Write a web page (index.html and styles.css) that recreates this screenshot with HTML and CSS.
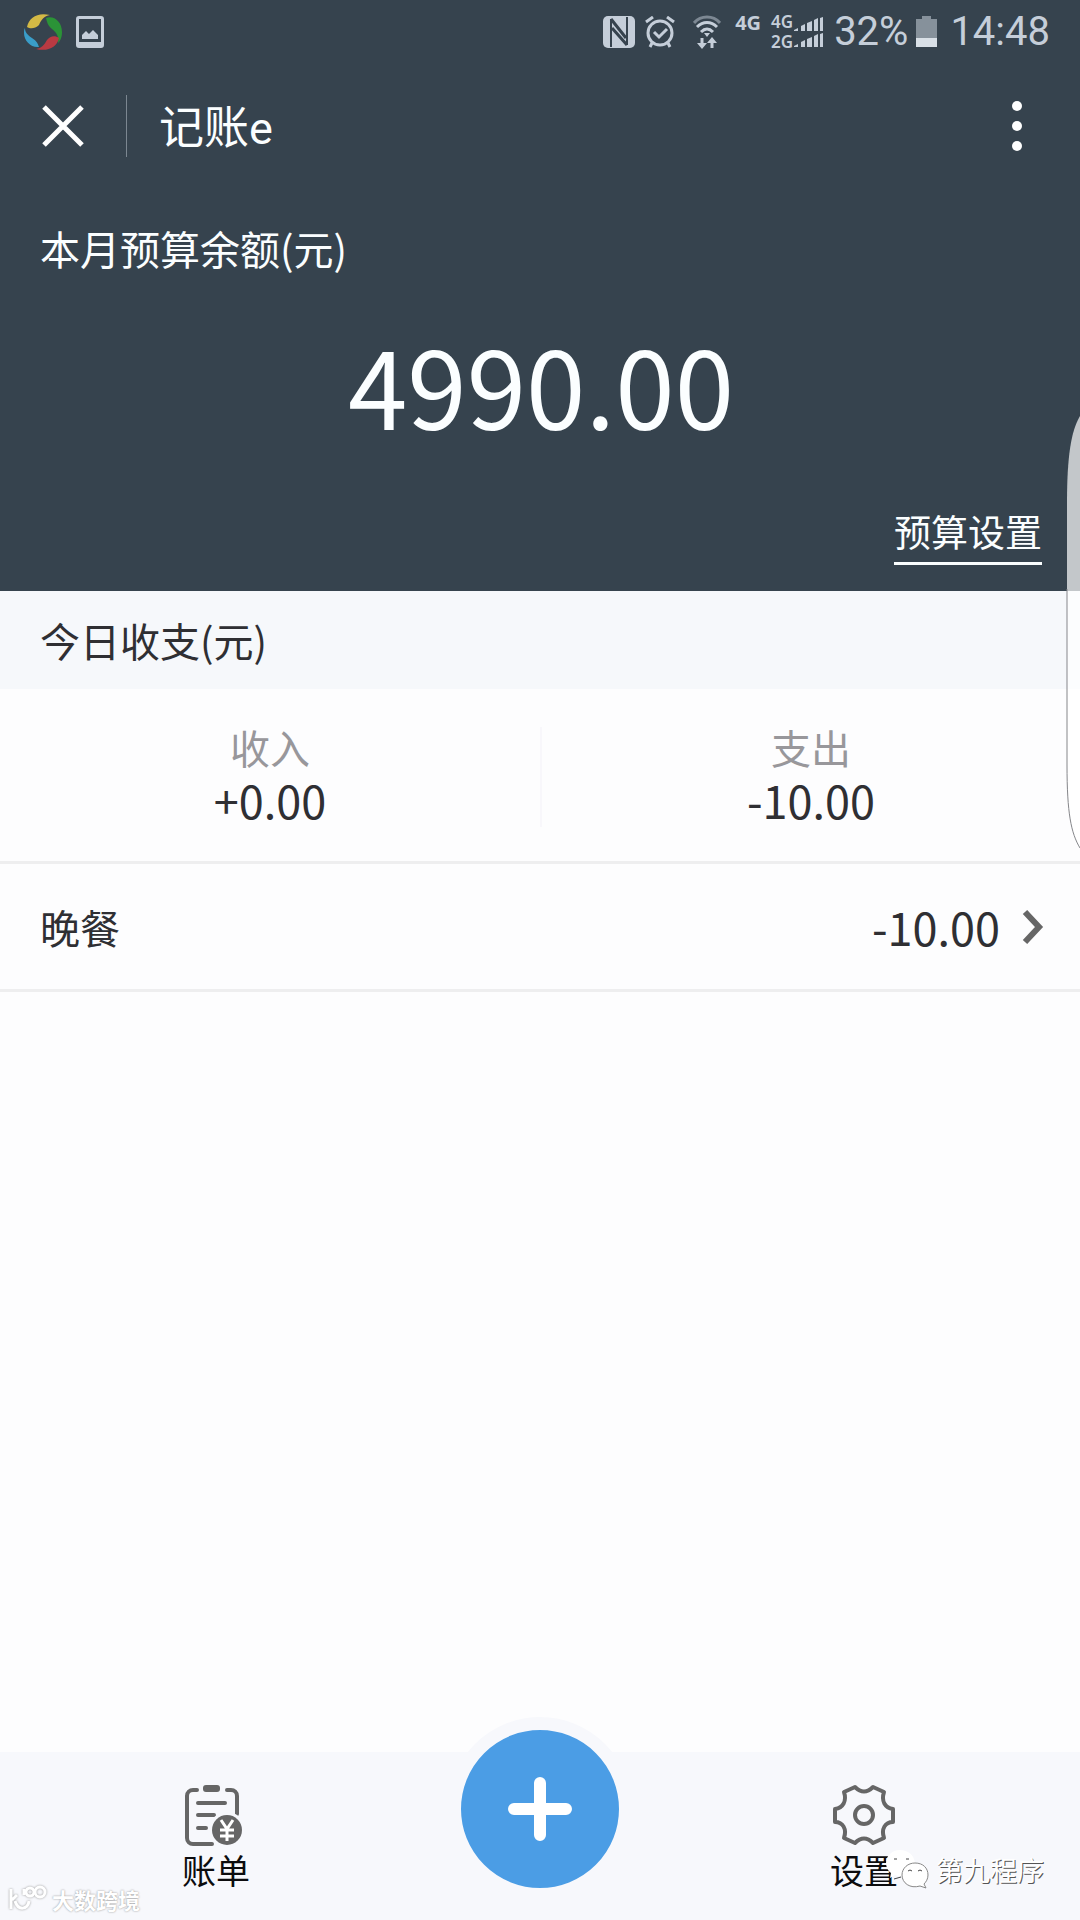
FILE: index.html
```html
<!DOCTYPE html>
<html lang="zh-CN">
<head>
<meta charset="utf-8">
<meta name="viewport" content="width=device-width, initial-scale=1">
<title>记账e</title>
<link rel="stylesheet" href="styles.css">
</head>
<body>
<div class="app">
  <header class="top">
    <div class="status">
      <svg class="status-swirl" width="38" height="38" viewBox="0 0 38 38" aria-hidden="true">
        <path d="M3 14C5 4 14-1 26 2c-6 1-9 5-11 10-4 4-9 4-12 2z" fill="#d3b945"/>
        <path d="M22 5c8-3 16 4 16 14 0 6-2 9-4 11 1-6-1-10-6-14-4-3-5-7-6-11z" fill="#2b9337"/>
        <path d="M35 25c-2 9-11 14-23 11 6-1 8-4 11-9 3-4 8-5 12-2z" fill="#b93a42"/>
        <path d="M1 15c0 5 3 7 7 10 5 3 6 6 7 9C7 35 0 28 0 20c0-2 0-4 1-5z" fill="#3a9dc8"/>
      </svg>
      <svg width="28" height="32" viewBox="0 0 28 32" aria-hidden="true">
        <path d="M3 0h22a3 3 0 0 1 3 3v26a3 3 0 0 1-3 3H3a3 3 0 0 1-3-3V3a3 3 0 0 1 3-3zm0 3v23h22V3z" fill="#c5ced9" fill-rule="evenodd"/>
        <path d="M6 23v-4l4-4 3 3 4-4 5 5v4z" fill="#c5ced9"/>
      </svg>
      <span class="status-space"></span>
      <svg class="status-nfc" width="32" height="32" viewBox="0 0 32 32" aria-hidden="true">
        <rect width="32" height="32" rx="5" fill="#c5ced9"/>
        <path d="M8 31V3M24 1v28" fill="none" stroke="#36434e" stroke-width="2"/>
        <path d="M8 3l15 19M9 12l15 17" fill="none" stroke="#36434e" stroke-width="3"/>
      </svg>
      <svg class="status-alarm" width="30" height="32" viewBox="0 0 30 32" fill="none" stroke="#c5ced9" stroke-width="3" aria-hidden="true">
        <circle cx="15" cy="17" r="12"/>
        <path d="M9 16l5 5 8-8M1 6l7-5M22 1l7 5M7 27l-2 4M23 27l2 4"/>
      </svg>
      <svg class="status-wifi" width="28" height="34" viewBox="0 0 28 34" fill="none" stroke="#c5ced9" stroke-width="3" aria-hidden="true">
        <path d="M1 8c7-8 19-8 26 0" stroke="#7d8893"/>
        <path d="M4 12c6-6 14-6 20 0M8 17c4-4 8-4 12 0"/>
        <path d="M14 22l-3-4h6zM9 34l-5-6h10zM19 22l-5 6h10z" fill="#c5ced9" stroke="none"/>
        <path d="M9 23v7M19 25v8"/>
      </svg>
      <span class="net">4G</span>
      <div class="net-dual">
        <span class="net-line">4G</span>
        <span class="net-line">2G</span>
      </div>
      <svg class="status-bars" width="30" height="32" viewBox="0 0 30 32" fill="#c5ced9" aria-hidden="true">
        <path d="M0 15v-1l4-2v3zM7 15v-5l4-2v7zM13 15V7l5-2v10zM20 15V4l4-2v13zM26 15V2l3-1v14zM0 31v-1l4-2v3zM7 31v-5l4-2v7zM13 31v-8l5-2v10zM20 31V20l4-2v13zM26 31V18l3-1v14z"/>
      </svg>
      <span class="status-text">32%</span>
      <svg class="status-battery" width="22" height="32" viewBox="0 0 22 32" aria-hidden="true">
        <path d="M6 0h9v3h6v19H0V3h6z" fill="#86919b"/>
        <path d="M0 22h21v9H0z" fill="#d9e0e7"/>
      </svg>
      <span class="status-text">14:48</span>
    </div>

    <div class="titlebar">
      <button class="icon-button" type="button" aria-label="关闭">
        <svg width="42" height="42" viewBox="0 0 42 42" aria-hidden="true"><path d="M2 2l38 38M40 2L2 40" stroke="#fff" stroke-width="5"/></svg>
      </button>
      <h1 class="title">记账e</h1>
      <button class="icon-button" type="button" aria-label="更多">
        <svg width="10" height="50" viewBox="0 0 10 50" fill="#fff" aria-hidden="true"><circle cx="5" cy="5" r="5"/><circle cx="5" cy="25" r="5"/><circle cx="5" cy="45" r="5"/></svg>
      </button>
    </div>

    <section class="budget">
      <h2 class="budget-label">本月预算余额(元)</h2>
      <p class="budget-value">4990.00</p>
      <a class="budget-link" href="#budget">预算设置</a>
    </section>
  </header>

  <main class="content">
    <h2 class="section-title">今日收支(元)</h2>
    <div class="summary">
      <div class="summary-cell">
        <span class="summary-label">收入</span>
        <span class="amount">+0.00</span>
      </div>
      <div class="summary-cell">
        <span class="summary-label">支出</span>
        <span class="amount">-10.00</span>
      </div>
    </div>
    <a class="entry" href="#entry">
      <span class="entry-name">晚餐</span>
      <span class="amount">-10.00</span>
      <svg width="22" height="36" viewBox="0 0 22 36" fill="none" stroke="#666" stroke-width="6" aria-hidden="true"><path d="M3 3l14 15L3 33"/></svg>
    </a>
  </main>

  <nav class="tabs">
    <a class="tab" href="#bills">
      <svg width="68" height="62" viewBox="0 0 68 62" aria-hidden="true">
        <g fill="none" stroke="#666" stroke-width="4" stroke-linecap="round">
          <path d="M15 6h-4a6 6 0 0 0-6 6v42a6 6 0 0 0 6 6h19M45 6h4a6 6 0 0 1 6 6v18"/>
          <path d="M16 19h27M16 31h16M16 44h8"/>
        </g>
        <rect x="21" y="1" width="17" height="7" rx="3" fill="#666"/>
        <circle cx="45" cy="46" r="18" fill="#f7f8fc"/>
        <circle cx="45" cy="46" r="15" fill="#666"/>
        <path d="M39 36l6 9 6-9M45 45v12M38 46h14M38 52h14" fill="none" stroke="#fff" stroke-width="3"/>
      </svg>
      <span class="tab-label">账单</span>
    </a>
    <button class="add" type="button" aria-label="记一笔">
      <svg width="64" height="64" viewBox="0 0 64 64" aria-hidden="true"><path d="M32 6v52M6 32h52" stroke="#fff" stroke-width="12" stroke-linecap="round"/></svg>
    </button>
    <a class="tab" href="#settings">
      <svg width="62" height="62" viewBox="0 0 62 62" fill="none" stroke="#666" stroke-width="4" stroke-linejoin="round" aria-hidden="true">
        <path d="M22 3C28 9 34 9 40 3L51 8C48 17 52 24 60 25V38C52 38 48 45 51 54L40 59C34 53 28 53 22 59L11 54C14 45 10 38 2 38V25C10 24 14 17 11 8Z"/>
        <circle cx="31" cy="31" r="9"/>
      </svg>
      <span class="tab-label">设置</span>
    </a>
  </nav>

  <svg class="edge-handle" width="14" height="434" viewBox="0 0 14 434" aria-hidden="true">
    <path d="M14 1C5 16 1 42 1 88V350C1 398 5 418 14 433Z" fill="#fff" fill-opacity=".7"/>
    <path d="M1 174V350C1 398 5 418 14 433" fill="none" stroke="#85868a"/>
  </svg>

  <div class="mark mark-right">
    <svg width="44" height="40" viewBox="0 0 44 40" aria-hidden="true">
      <path d="M14 0C6 0 0 6 0 13c0 4 2 8 5 10l-1 5 5-3c2 1 5 1 8 1 9-1 13-6 12-13C28 5 22 0 14 0z" fill="#fff"/>
      <path d="M29 13c8 0 13 5 13 12 0 4-2 7-4 9l2 4-6-2c-10 3-18-3-18-11 0-7 6-12 13-12z" fill="#fff" stroke="#888"/>
      <path d="M8 9h3M20 9h3M22 21q2-2 4 0M32 21q2-2 4 0M8 29l7-2" fill="none" stroke="#444"/>
    </svg>
    <span class="mark-right-text">第九程序</span>
  </div>
  <div class="mark mark-left">
    <svg class="mark-logo" width="40" height="28" viewBox="0 0 40 28" fill="none" stroke="#fff" stroke-width="3" aria-hidden="true">
      <path d="M3 4v20M4 15l5-5M7 16c3 10 13 9 14 0M16 4v6"/><circle cx="22" cy="7" r="4"/><circle cx="32" cy="7" r="5"/>
    </svg>
    <span class="mark-left-text">大数跨境</span>
  </div>
</div>
</body>
</html>
```
FILE: styles.css
```css
* {
  box-sizing: border-box;
}

body {
  margin: 0;
  font-family: "Noto Sans CJK SC", "Noto Sans", sans-serif;
  color: #2f2f33;
  background: #fdfdfe;
}

h1,
h2,
p {
  margin: 0;
  font-weight: 400;
}

a {
  color: inherit;
  text-decoration: none;
}

button {
  padding: 0;
  border: 0;
  background: none;
  cursor: pointer;
}

svg {
  display: block;
  flex: none;
}

.app {
  position: relative;
  display: flex;
  flex-direction: column;
  min-height: 100vh;
  overflow: hidden;
}

/* Header */
.top {
  background: #36434e;
  color: #fbfeff;
}

.status {
  display: flex;
  align-items: center;
  height: 64px;
  padding: 0 30px 0 24px;
  color: #c5ced9;
  font-family: Roboto, sans-serif;
}

.status-swirl {
  margin-right: 14px;
}

.status-space {
  flex: 1;
}

.status-nfc {
  margin-right: 10px;
}

.status-alarm {
  margin-right: 18px;
}

.status-wifi {
  margin-right: 14px;
}

.net {
  align-self: flex-start;
  margin: 13px 10px 0 0;
  font: 700 20px/20px "Noto Sans", sans-serif;
}

.net-dual {
  display: flex;
  flex-direction: column;
}

.net-line {
  font: 600 17px/20px "Noto Sans", sans-serif;
}

.status-bars {
  margin: 0 10px 0 1px;
}

.status-text {
  font-size: 40px;
  line-height: 48px;
}

.status-battery {
  margin: 0 12px 0 8px;
}

.titlebar {
  display: flex;
  align-items: center;
  height: 124px;
  padding: 0 58px 0 42px;
}

.title {
  flex: 1;
  margin-left: 42px;
  padding: 6px 0 0 32px;
  border-left: 1px solid #7c8791;
  font-family: Roboto, "Noto Sans CJK SC", sans-serif;
  font-size: 45px;
  line-height: 56px;
}

.budget {
  display: flex;
  flex-direction: column;
  padding: 32px 38px 26px 40px;
}

.budget-label {
  font-size: 40px;
  line-height: 56px;
}

.budget-value {
  margin-top: 48px;
  font-size: 107px;
  line-height: 120px;
  text-align: center;
}

.budget-link {
  align-self: flex-end;
  margin-top: 60px;
  padding-bottom: 4px;
  border-bottom: 3px solid #fbfeff;
  font-size: 37px;
  line-height: 54px;
}

/* Today */
.content {
  flex: 1;
}

.section-title {
  padding: 20px 40px;
  background: #f6f8fb;
  font-size: 40px;
  line-height: 58px;
}

.summary {
  display: grid;
  grid-template-columns: 1fr 1fr;
  padding: 38px 0 34px;
  border-bottom: 3px solid #eeeeef;
}

.summary-cell {
  display: flex;
  flex-direction: column;
  align-items: center;
  gap: 6px;
}

.summary-cell + .summary-cell {
  border-left: 2px solid #f8f7fb;
}

.summary-label {
  color: #98979b;
  font-size: 40px;
  line-height: 40px;
}

.amount {
  font-size: 45px;
  line-height: 54px;
}

.entry {
  display: flex;
  align-items: center;
  padding: 36px 36px 35px 40px;
  border-bottom: 3px solid #eeeeef;
}

.entry-name {
  flex: 1;
  font-size: 40px;
  line-height: 54px;
}

.entry .amount {
  margin-right: 22px;
}

/* Bottom bar */
.tabs {
  display: grid;
  grid-template-columns: 2fr 1fr 2fr;
  height: 168px;
  background: #f7f8fc;
}

.tab {
  display: flex;
  flex-direction: column;
  align-items: center;
  padding-top: 32px;
  color: #0c0c0e;
}

.tab-label {
  font-size: 34px;
  line-height: 48px;
}

.add {
  display: flex;
  align-items: center;
  justify-content: center;
  justify-self: center;
  width: 184px;
  height: 184px;
  margin-top: -35px;
  border: 13px solid #f7f8fc;
  border-radius: 50%;
  background: #4b9de5;
}

/* Overlays */
.edge-handle {
  position: absolute;
  top: 415px;
  right: 0;
}

.mark {
  position: absolute;
  display: flex;
  align-items: center;
  color: #fff;
}

.mark-right {
  right: 36px;
  bottom: 30px;
  gap: 6px;
}

.mark-right-text {
  font-size: 27px;
  line-height: 40px;
  text-shadow: 1px 1px 0 #555;
}

.mark-left {
  bottom: 5px;
  left: 8px;
  gap: 4px;
}

.mark-logo {
  filter: drop-shadow(0 0 1px #999);
}

.mark-left-text {
  font-size: 22px;
  font-weight: 700;
  line-height: 32px;
  text-shadow: 0 0 2px #888;
}
```
